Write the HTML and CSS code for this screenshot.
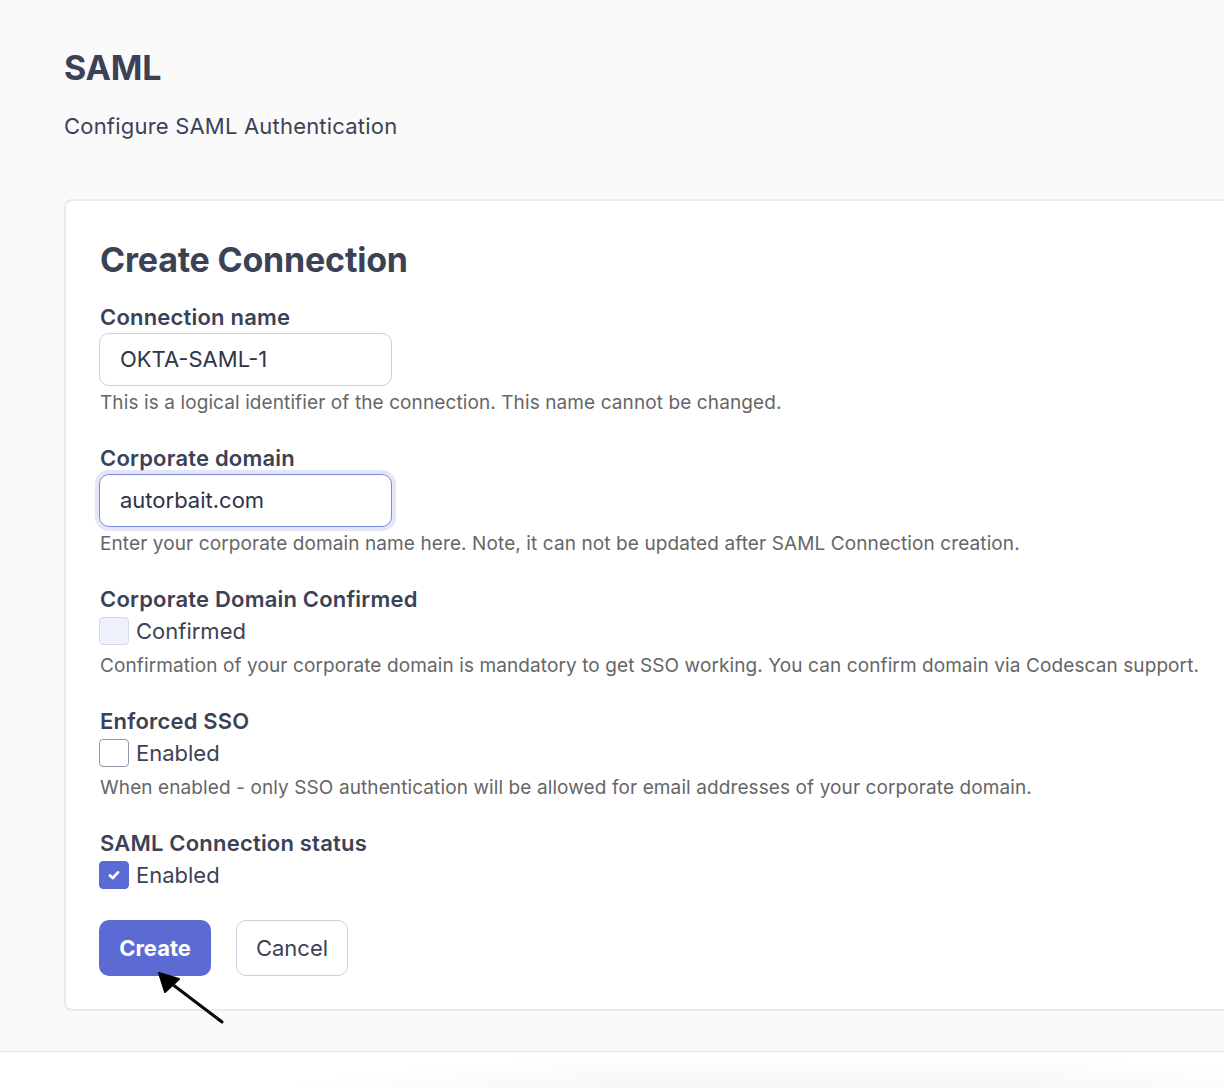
FILE: index.html
```html
<!DOCTYPE html>
<html lang="en">
<head>
<meta charset="utf-8">
<title>SAML</title>
<link rel="stylesheet" href="styles.css">
</head>
<body>
<div class="page">
  <header class="page-header">
    <h1 class="page-title">SAML</h1>
    <p class="page-subtitle">Configure SAML Authentication</p>
  </header>
  <section class="card">
    <h2 class="card-title">Create Connection</h2>

    <div class="field">
      <label class="field-label">Connection name</label>
      <div class="input">OKTA-SAML-1</div>
      <p class="help">This is a logical identifier of the connection. This name cannot be changed.</p>
    </div>

    <div class="field">
      <label class="field-label">Corporate domain</label>
      <div class="input input-focus">autorbait.com</div>
      <p class="help">Enter your corporate domain name here. Note, it can not be updated after SAML Connection creation.</p>
    </div>

    <div class="field">
      <label class="field-label">Corporate Domain Confirmed</label>
      <div class="check-row"><span class="box box-disabled"></span><span class="check-text">Confirmed</span></div>
      <p class="help help-check">Confirmation of your corporate domain is mandatory to get SSO working. You can confirm domain via Codescan support.</p>
    </div>

    <div class="field">
      <label class="field-label">Enforced SSO</label>
      <div class="check-row"><span class="box"></span><span class="check-text">Enabled</span></div>
      <p class="help help-check">When enabled - only SSO authentication will be allowed for email addresses of your corporate domain.</p>
    </div>

    <div class="field field-last">
      <label class="field-label">SAML Connection status</label>
      <div class="check-row"><span class="box box-checked"><svg width="16" height="16" viewBox="0 0 16 16"><path d="M4 8.6 L6.8 11 L12 5.4" fill="none" stroke="#fff" stroke-width="2.8" stroke-linecap="round" stroke-linejoin="round"/></svg></span><span class="check-text">Enabled</span></div>
    </div>

    <div class="actions">
      <button class="btn btn-primary">Create</button>
      <button class="btn btn-secondary">Cancel</button>
    </div>
  </section>
  <div class="footer"></div>
  <svg class="arrow" width="80" height="70" viewBox="150 965 80 70">
    <path d="M222 1022 L168 981" stroke="#000" stroke-width="3" fill="none" stroke-linecap="round"/>
    <path d="M222 1021 L169 982" stroke="#111" stroke-width="1.5" fill="none"/>
    <polygon points="159,973 165,992 179,979" fill="#000" stroke="#000" stroke-width="2" stroke-linejoin="round"/>
  </svg>
</div>
</body>
</html>
```

FILE: styles.css
```css
html, body {
  margin: 0;
  padding: 0;
}
body {
  background: #fafafa;
  font-family: Inter, "Noto Sans", "Liberation Sans", sans-serif;
  color: #3c4256;
  width: 1224px;
  height: 1088px;
  overflow: hidden;
}
.page {
  position: relative;
  padding: 46px 0 0 64px;
}
.page-title {
  margin: 0;
  font-size: 34px;
  line-height: 44px;
  font-weight: 700;
  letter-spacing: -0.2px;
}
.page-subtitle {
  margin: 21px 0 0;
  font-size: 22px;
  line-height: 30px;
  font-weight: 400;
  letter-spacing: 0.2px;
}
.page-header {
  margin-bottom: 58px;
}
.card {
  background: #fff;
  border: 2px solid #ebebeb;
  border-right: none;
  border-radius: 8px 0 0 8px;
  padding: 37px 0 33px 34px;
}
.card-title {
  margin: 0 0 21px;
  font-size: 34px;
  line-height: 44px;
  font-weight: 700;
  letter-spacing: -0.2px;
}
.field {
  margin-bottom: 28px;
}
.field-last {
  margin-bottom: 31px;
}
.field-label {
  display: block;
  font-size: 22px;
  line-height: 28px;
  font-weight: 600;
  letter-spacing: 0.2px;
  margin-bottom: 2px;
}
.input {
  box-sizing: border-box;
  width: 293px;
  height: 53px;
  margin-left: -1px;
  border: 1px solid #c8cfdd;
  border-radius: 10px;
  padding: 0 0 0 20px;
  font-size: 22px;
  line-height: 51px;
  color: #2f3447;
  background: #fff;
}
.input-focus {
  border-color: #7b87de;
  box-shadow: 0 0 0 4px #e3e6f7;
}
.help {
  margin: 4px 0 0;
  font-size: 19px;
  line-height: 26px;
  color: #666;
  letter-spacing: 0.1px;
}
.help-check {
  margin-top: 8px;
}
.check-row {
  display: flex;
  align-items: center;
  gap: 7px;
  height: 28px;
  margin-top: 4px;
  margin-left: -1px;
}
.box {
  box-sizing: border-box;
  width: 30px;
  height: 28px;
  border: 1px solid #8f97ab;
  border-radius: 4px;
  background: #fff;
  display: flex;
  align-items: center;
  justify-content: center;
}
.box-disabled {
  background: #eef1f9;
  border-color: #d3d9e8;
}
.box-checked {
  background: #5a6bd3;
  border-color: #5a6bd3;
}
.check-text {
  font-size: 22px;
  line-height: 28px;
}
.actions {
  display: flex;
  gap: 25px;
  margin-left: -1px;
}
.btn {
  box-sizing: border-box;
  width: 112px;
  height: 56px;
  border-radius: 10px;
  font-family: inherit;
  font-size: 22px;
  padding: 0;
  cursor: pointer;
}
.btn-primary {
  background: #5c6bd3;
  border: none;
  color: #fff;
  font-weight: 700;
}
.btn-secondary {
  background: #fff;
  border: 1px solid #c9d0e0;
  color: #3c4256;
  font-weight: 400;
}
.footer {
  margin-top: 40px;
  margin-left: -64px;
  height: 40px;
  border-top: 1px solid #e6e6e6;
  background: radial-gradient(ellipse 600px 60px at 820px 60px, #ededed 0%, #f6f6f6 50%, #ffffff 100%);
}
.arrow {
  position: absolute;
  left: 150px;
  top: 965px;
}
```
